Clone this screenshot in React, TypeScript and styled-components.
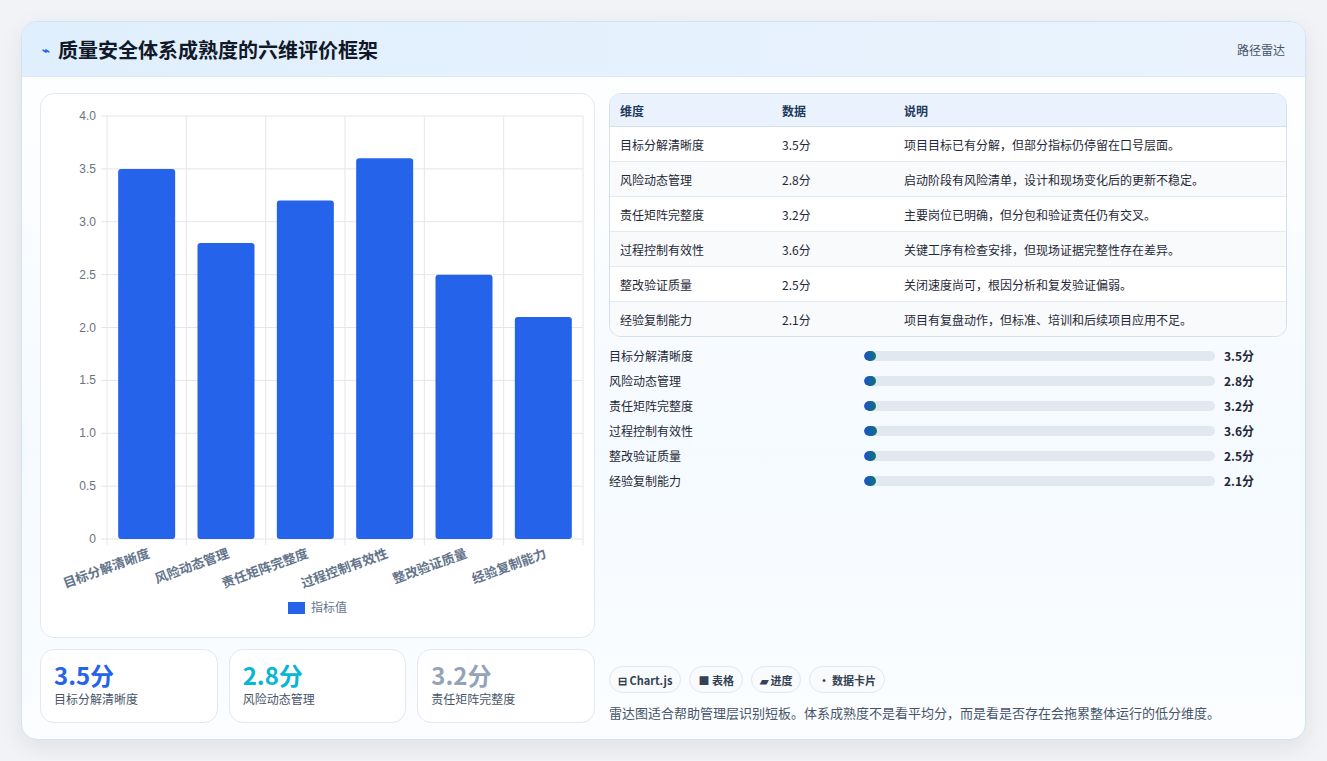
import styled, { createGlobalStyle } from 'styled-components'

const GlobalStyle = createGlobalStyle`
  body { margin: 0; background: #f1f3f6; font-family: "Noto Sans CJK SC", "Noto Sans", sans-serif; }
`

const data = [
  { name: '目标分解清晰度', value: 3.5, note: '项目目标已有分解，但部分指标仍停留在口号层面。' },
  { name: '风险动态管理', value: 2.8, note: '启动阶段有风险清单，设计和现场变化后的更新不稳定。' },
  { name: '责任矩阵完整度', value: 3.2, note: '主要岗位已明确，但分包和验证责任仍有交叉。' },
  { name: '过程控制有效性', value: 3.6, note: '关键工序有检查安排，但现场证据完整性存在差异。' },
  { name: '整改验证质量', value: 2.5, note: '关闭速度尚可，根因分析和复发验证偏弱。' },
  { name: '经验复制能力', value: 2.1, note: '项目有复盘动作，但标准、培训和后续项目应用不足。' },
]

const Chart = () => {
  const W = 555, H = 543
  const x0 = 66, x1 = 542, y0 = 22, y1 = 445
  const step = (x1 - x0) / 6
  const ticks = [0, 0.5, 1, 1.5, 2, 2.5, 3, 3.5, 4]
  const yOf = (v: number) => y1 - (v / 4) * (y1 - y0)
  return (
    <svg width={W} height={H} style={{ display: 'block' }}>
      {ticks.map((t) => (
        <g key={t}>
          <line x1={x0 - 6} x2={x1} y1={yOf(t)} y2={yOf(t)} stroke="#e3e6ec" />
          <text x={x0 - 11} y={yOf(t) + 4} fontSize="12" fill="#6b7280" textAnchor="end" fontFamily="Liberation Sans, sans-serif">
            {t === 0 ? '0' : t.toFixed(1)}
          </text>
        </g>
      ))}
      {Array.from({ length: 7 }).map((_, i) => (
        <line key={i} x1={x0 + i * step} x2={x0 + i * step} y1={y0} y2={y1 + 6} stroke="#e3e6ec" />
      ))}
      {data.map((d, i) => {
        const cx = x0 + step * i + step / 2
        return (
          <g key={d.name}>
            <rect x={cx - 28.5} y={yOf(d.value)} width={57} height={y1 - yOf(d.value)} rx={3} fill="#2563eb" />
            <text
              transform={`translate(${cx + 4},${y1 + 18}) rotate(-20)`}
              fontSize="13" fontWeight="600" fill="#64748b" textAnchor="end"
            >{d.name}</text>
          </g>
        )
      })}
      <rect x={247} y={508} width={17} height={12} fill="#2563eb" />
      <text x={270} y={518} fontSize="12" fill="#64748b">指标值</text>
    </svg>
  )
}

export default function App() {
  return (
    <Page>
      <GlobalStyle />
      <Card>
        <Header>
          <Title><Bolt>⌁</Bolt>质量安全体系成熟度的六维评价框架</Title>
          <Tag>路径雷达</Tag>
        </Header>
        <Body>
          <Left>
            <ChartCard><Chart /></ChartCard>
            <Kpis>
              <Kpi><KpiValue color="#2563eb">3.5分</KpiValue><KpiLabel>目标分解清晰度</KpiLabel></Kpi>
              <Kpi><KpiValue color="#06b6d4">2.8分</KpiValue><KpiLabel>风险动态管理</KpiLabel></Kpi>
              <Kpi><KpiValue color="#94a3b8">3.2分</KpiValue><KpiLabel>责任矩阵完整度</KpiLabel></Kpi>
            </Kpis>
          </Left>
          <Right>
            <Table>
              <thead>
                <tr><Th>维度</Th><Th>数据</Th><Th>说明</Th></tr>
              </thead>
              <tbody>
                {data.map((d) => (
                  <tr key={d.name}><Td>{d.name}</Td><Td>{d.value}分</Td><Td>{d.note}</Td></tr>
                ))}
              </tbody>
            </Table>
            <Bars>
              {data.map((d) => (
                <BarRow key={d.name}>
                  <BarLabel>{d.name}</BarLabel>
                  <Track><Fill style={{ width: `${d.value}%` }} /></Track>
                  <BarValue>{d.value}分</BarValue>
                </BarRow>
              ))}
            </Bars>
            <Spacer />
            <Chips>
              <Chip>⊟ Chart.js</Chip>
              <Chip>■ 表格</Chip>
              <Chip>▰ 进度</Chip>
              <Chip>• 数据卡片</Chip>
            </Chips>
            <Note>雷达图适合帮助管理层识别短板。体系成熟度不是看平均分，而是看是否存在会拖累整体运行的低分维度。</Note>
          </Right>
        </Body>
      </Card>
    </Page>
  )
}

const Page = styled.div`
  padding: 21px 21px 20px 21px;
`

const Card = styled.div`
  width: 1285px;
  height: 719px;
  box-sizing: border-box;
  border: 1px solid #cfe3f2;
  border-radius: 16px;
  background: linear-gradient(180deg, #ffffff 0%, #f5faff 60%, #fbfdff 100%);
  box-shadow: 0 8px 24px rgba(15, 23, 42, 0.08);
  display: flex;
  flex-direction: column;
  overflow: hidden;
`

const Header = styled.div`
  height: 54px;
  flex-shrink: 0;
  display: flex;
  align-items: center;
  justify-content: space-between;
  padding: 0 20px;
  background: linear-gradient(90deg, #e0effd 0%, #eaf3fd 100%);
  border-bottom: 1px solid #dbe8f5;
`

const Title = styled.div`
  font-size: 20px;
  font-weight: 700;
  color: #111827;
  display: flex;
  align-items: center;
  gap: 8px;
`

const Bolt = styled.span`
  color: #2563eb;
  font-size: 13px;
`

const Tag = styled.div`
  font-size: 12px;
  color: #475569;
`

const Body = styled.div`
  flex: 1;
  display: flex;
  gap: 14px;
  padding: 16px 18px 18px 18px;
`

const Left = styled.div`
  width: 555px;
  display: flex;
  flex-direction: column;
  gap: 11px;
`

const ChartCard = styled.div`
  height: 543px;
  border: 1px solid #e2e8f0;
  border-radius: 14px;
  background: #fff;
  overflow: hidden;
`

const Kpis = styled.div`
  display: flex;
  gap: 11px;
`

const Kpi = styled.div`
  flex: 1;
  height: 74px;
  box-sizing: border-box;
  border: 1px solid #e2e8f0;
  border-radius: 14px;
  background: #fff;
  padding: 10px 13px;
`

const KpiValue = styled.div<{ color: string }>`
  font-size: 24px;
  font-weight: 700;
  line-height: 30px;
  color: ${(p) => p.color};
`

const KpiLabel = styled.div`
  font-size: 12px;
  color: #475569;
`

const Right = styled.div`
  flex: 1;
  display: flex;
  flex-direction: column;
`

const Table = styled.table`
  width: 100%;
  border-collapse: separate;
  border-spacing: 0;
  border: 1px solid #d6e0ea;
  border-radius: 12px;
  overflow: hidden;
  font-size: 12px;
  color: #1f2937;
  tr:nth-child(even) td { background: #f8fafc; }
`

const Th = styled.th`
  text-align: left;
  font-weight: 700;
  height: 32px;
  padding: 0 10px;
  background: #eaf3fd;
  color: #1e3a5f;
  border-bottom: 1px solid #d6e0ea;
  &:nth-child(1) { width: 142px; }
  &:nth-child(2) { width: 102px; }
`

const Td = styled.td`
  height: 34px;
  padding: 0 10px;
  background: #fff;
  border-bottom: 1px solid #e5eaf0;
  tr:last-child & { border-bottom: none; }
`

const Bars = styled.div`
  margin-top: 6px;
  display: flex;
  flex-direction: column;
`

const BarRow = styled.div`
  height: 25px;
  display: flex;
  align-items: center;
`

const BarLabel = styled.div`
  width: 255px;
  font-size: 12px;
  color: #1f2937;
`

const Track = styled.div`
  width: 351px;
  height: 10px;
  border-radius: 5px;
  background: #e2e8f0;
  overflow: hidden;
`

const Fill = styled.div`
  height: 100%;
  min-width: 12px;
  border-radius: 5px;
  background: linear-gradient(90deg, #1d4ed8, #0f766e);
`

const BarValue = styled.div`
  margin-left: 9px;
  font-size: 12px;
  font-weight: 700;
  color: #1f2937;
`

const Spacer = styled.div`
  flex: 1;
`

const Chips = styled.div`
  display: flex;
  gap: 8px;
`

const Chip = styled.div`
  height: 27px;
  box-sizing: border-box;
  padding: 0 8px;
  display: flex;
  align-items: center;
  border: 1px solid #e2e8f0;
  border-radius: 14px;
  background: #f8fafc;
  font-size: 11px;
  font-weight: 700;
  color: #334155;
`

const Note = styled.div`
  margin-top: 10px;
  font-size: 13px;
  color: #475569;
  line-height: 20px;
`
